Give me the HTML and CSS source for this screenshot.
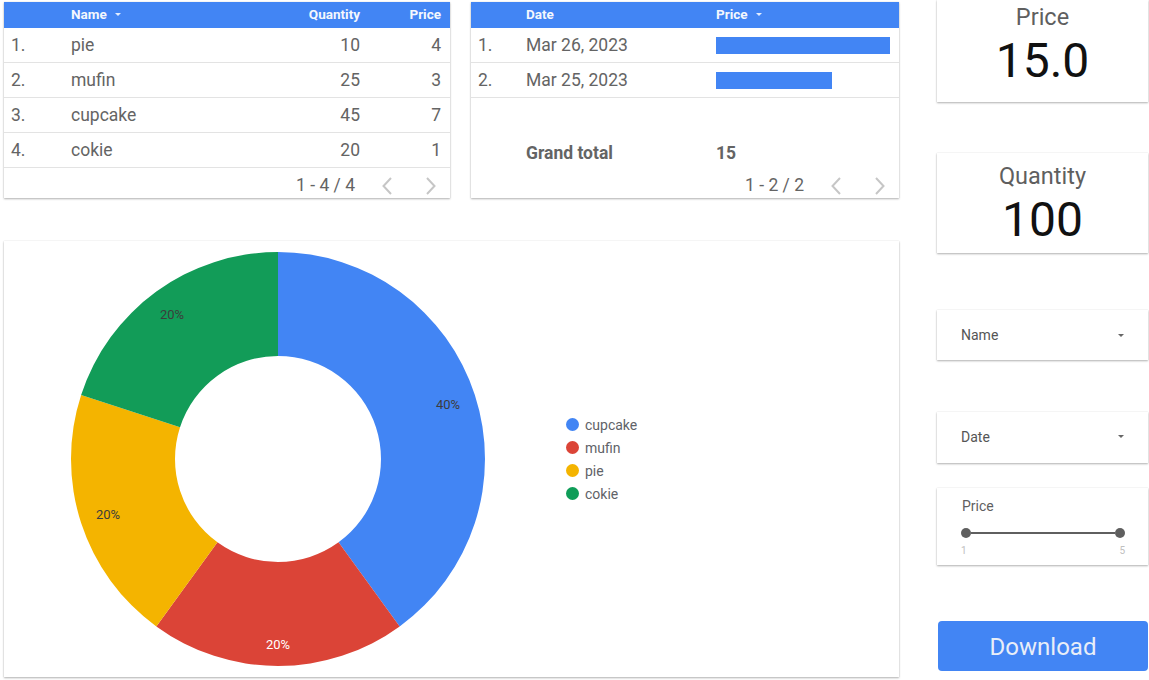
FILE: index.html
```html
<!DOCTYPE html>
<html>
<head>
<meta charset="utf-8">
<link rel="stylesheet" href="styles.css">
</head>
<body>
<div class="page">
  <div class="main">
    <div class="tables">
      <section class="card table t1">
        <div class="row thead"><span></span><span class="sort">Name</span><span class="num">Quantity</span><span class="num">Price</span></div>
        <div class="row"><span>1.</span><span>pie</span><span class="num">10</span><span class="num">4</span></div>
        <div class="row"><span>2.</span><span>mufin</span><span class="num">25</span><span class="num">3</span></div>
        <div class="row"><span>3.</span><span>cupcake</span><span class="num">45</span><span class="num">7</span></div>
        <div class="row"><span>4.</span><span>cokie</span><span class="num">20</span><span class="num">1</span></div>
        <div class="pager">
          <span>1 - 4 / 4</span>
          <svg class="chev first" width="10" height="18" viewBox="0 0 10 18"><path d="M9 1 L1.5 9 L9 17" fill="none" stroke="#c6c6c6" stroke-width="2"/></svg>
          <svg class="chev" width="10" height="18" viewBox="0 0 10 18"><path d="M1 1 L8.5 9 L1 17" fill="none" stroke="#c6c6c6" stroke-width="2"/></svg>
        </div>
      </section>
      <section class="card table t2">
        <div class="row thead"><span></span><span>Date</span><span class="sort">Price</span></div>
        <div class="row"><span>1.</span><span>Mar 26, 2023</span><span><i class="bar" style="width:100%"></i></span></div>
        <div class="row"><span>2.</span><span>Mar 25, 2023</span><span><i class="bar" style="width:66.7%"></i></span></div>
        <div class="total"><span></span><span>Grand total</span><span>15</span></div>
        <div class="pager">
          <span>1 - 2 / 2</span>
          <svg class="chev first" width="10" height="18" viewBox="0 0 10 18"><path d="M9 1 L1.5 9 L9 17" fill="none" stroke="#c6c6c6" stroke-width="2"/></svg>
          <svg class="chev" width="10" height="18" viewBox="0 0 10 18"><path d="M1 1 L8.5 9 L1 17" fill="none" stroke="#c6c6c6" stroke-width="2"/></svg>
        </div>
      </section>
    </div>
    <section class="card chart">
      <svg class="pie" width="548" height="436" viewBox="0 0 548 436">
        <path d="M274 11 A207 207 0 0 1 395.67 385.46 L334.54 301.33 A103 103 0 0 0 274 115 Z" fill="#4285f4"/>
        <path d="M395.67 385.46 A207 207 0 0 1 152.33 385.46 L213.46 301.33 A103 103 0 0 0 334.54 301.33 Z" fill="#db4437"/>
        <path d="M152.33 385.46 A207 207 0 0 1 77.13 154.03 L176.04 186.17 A103 103 0 0 0 213.46 301.33 Z" fill="#f4b400"/>
        <path d="M77.13 154.03 A207 207 0 0 1 274 11 L274 115 A103 103 0 0 0 176.04 186.17 Z" fill="#129c58"/>
        <g class="plabel">
          <text x="444" y="168">40%</text>
          <text x="168" y="78">20%</text>
          <text x="104" y="278">20%</text>
          <text x="274" y="408" class="light">20%</text>
        </g>
      </svg>
      <ul class="legend">
        <li><i class="dot blue"></i>cupcake</li>
        <li><i class="dot red"></i>mufin</li>
        <li><i class="dot yellow"></i>pie</li>
        <li><i class="dot green"></i>cokie</li>
      </ul>
    </section>
  </div>
  <aside class="side">
    <div class="card score score-price">
      <div class="score-label">Price</div>
      <div class="score-value">15.0</div>
    </div>
    <div class="card score score-qty">
      <div class="score-label">Quantity</div>
      <div class="score-value">100</div>
    </div>
    <div class="card drop drop-name"><span>Name</span><i class="caret"></i></div>
    <div class="card drop drop-date"><span>Date</span><i class="caret"></i></div>
    <div class="card slider">
      <div class="slider-label">Price</div>
      <div class="track"><i class="knob"></i><i class="line"></i><i class="knob"></i></div>
      <div class="scale"><span>1</span><span>5</span></div>
    </div>
    <button class="download">Download</button>
  </aside>
</div>
</body>
</html>
```

FILE: styles.css
```css
* { box-sizing: border-box; }
html, body { margin: 0; padding: 0; background: #fff; }
body { font-family: Roboto, "Liberation Sans", Arial, sans-serif; color: #646464; width: 1149px; height: 680px; overflow: hidden; }

.page { display: flex; align-items: flex-start; }
.main { width: 899px; padding-left: 4px; padding-top: 2px; }
.tables { display: flex; gap: 21px; }

.card { background: #fff; box-shadow: 0 1px 2px rgba(0,0,0,0.3), 0 0 1px rgba(0,0,0,0.12); }

.table { font-size: 17.5px; }
.t1 { width: 446px; }
.t2 { width: 428px; }

.row { display: grid; align-items: center; height: 35px; border-bottom: 1px solid #e3e3e3; padding: 0 9px 0 7px; white-space: nowrap; }
.t1 .row { grid-template-columns: 60px 1fr 100px 81px; }
.t2 .row, .t2 .total { grid-template-columns: 48px 190px 1fr; }
.row .num { text-align: right; }

.thead { height: 26px; background: #4285f4; color: #f4f7fd; font-weight: 700; font-size: 13.5px; border-bottom: none; padding-bottom: 2px; }
.sort::after { content: ""; display: inline-block; width: 0; height: 0; margin-left: 8px; vertical-align: middle; border-left: 3px solid transparent; border-right: 3px solid transparent; border-top: 3px solid rgba(255,255,255,0.85); position: relative; top: -1px; }

.bar { display: block; height: 17px; background: #4285f4; }

.total { display: grid; height: 70px; align-items: end; padding: 0 9px 5px 7px; font-weight: 700; line-height: 20px; }

.pager { display: flex; align-items: center; justify-content: flex-end; height: 30px; padding-right: 14px; padding-top: 4px; }
.pager span { line-height: 20px; }
.chev { display: block; margin-top: 2px; }
.chev.first { margin-left: 27px; margin-right: 34px; }

.chart { margin-top: 43px; height: 436px; display: flex; align-items: center; }
.pie { display: block; flex: none; }
.plabel text { font-family: Roboto, "Liberation Sans", Arial, sans-serif; font-size: 13px; fill: #3c3c3c; text-anchor: middle; }
.plabel text.light { fill: #fff; }
.legend { list-style: none; margin: 0 0 0 14px; padding: 0; font-size: 14px; color: #5f6368; }
.legend li { display: flex; align-items: center; height: 23px; }
.dot { display: block; width: 13px; height: 13px; border-radius: 50%; margin-right: 6px; }
.dot.blue { background: #4285f4; }
.dot.red { background: #db4437; }
.dot.yellow { background: #f4b400; }
.dot.green { background: #0f9d58; }

.side { width: 211px; margin-left: 38px; display: flex; flex-direction: column; }
.score { text-align: center; }
.score-price { height: 102px; padding-top: 3px; }
.score-qty { height: 100px; margin-top: 51px; padding-top: 9px; }
.score-label { font-size: 23.5px; line-height: 28px; color: #5f5f5f; }
.score-value { font-size: 48px; line-height: 48px; margin-top: 6px; color: #111; }

.drop { height: 50px; display: flex; align-items: center; justify-content: space-between; padding: 0 24px; font-size: 14px; color: #555; }
.drop-name { margin-top: 57px; }
.drop-date { margin-top: 52px; height: 51px; padding-bottom: 2px; }
.caret { display: block; width: 0; height: 0; border-left: 3px solid transparent; border-right: 3px solid transparent; border-top: 3px solid #666; }

.slider { margin-top: 25px; height: 77px; padding: 10px 23px 0 24px; }
.slider-label { font-size: 14px; line-height: 16px; color: #5f5f5f; padding-left: 1px; }
.track { display: flex; align-items: center; height: 10px; margin-top: 14px; }
.knob { display: block; width: 10px; height: 10px; border-radius: 50%; background: #5f5f5f; flex: none; }
.line { display: block; flex: 1; height: 2px; background: #5f5f5f; }
.scale { display: flex; justify-content: space-between; font-size: 10px; line-height: 12px; margin-top: 7px; color: #c0c0c0; }

.download { margin-top: 56px; margin-left: 1px; width: 210px; height: 50px; border: none; border-radius: 4px; background: #4285f4; color: #e8eef8; font-family: Roboto, "Liberation Sans", Arial, sans-serif; font-size: 24px; padding: 2px 0 0; }
```
